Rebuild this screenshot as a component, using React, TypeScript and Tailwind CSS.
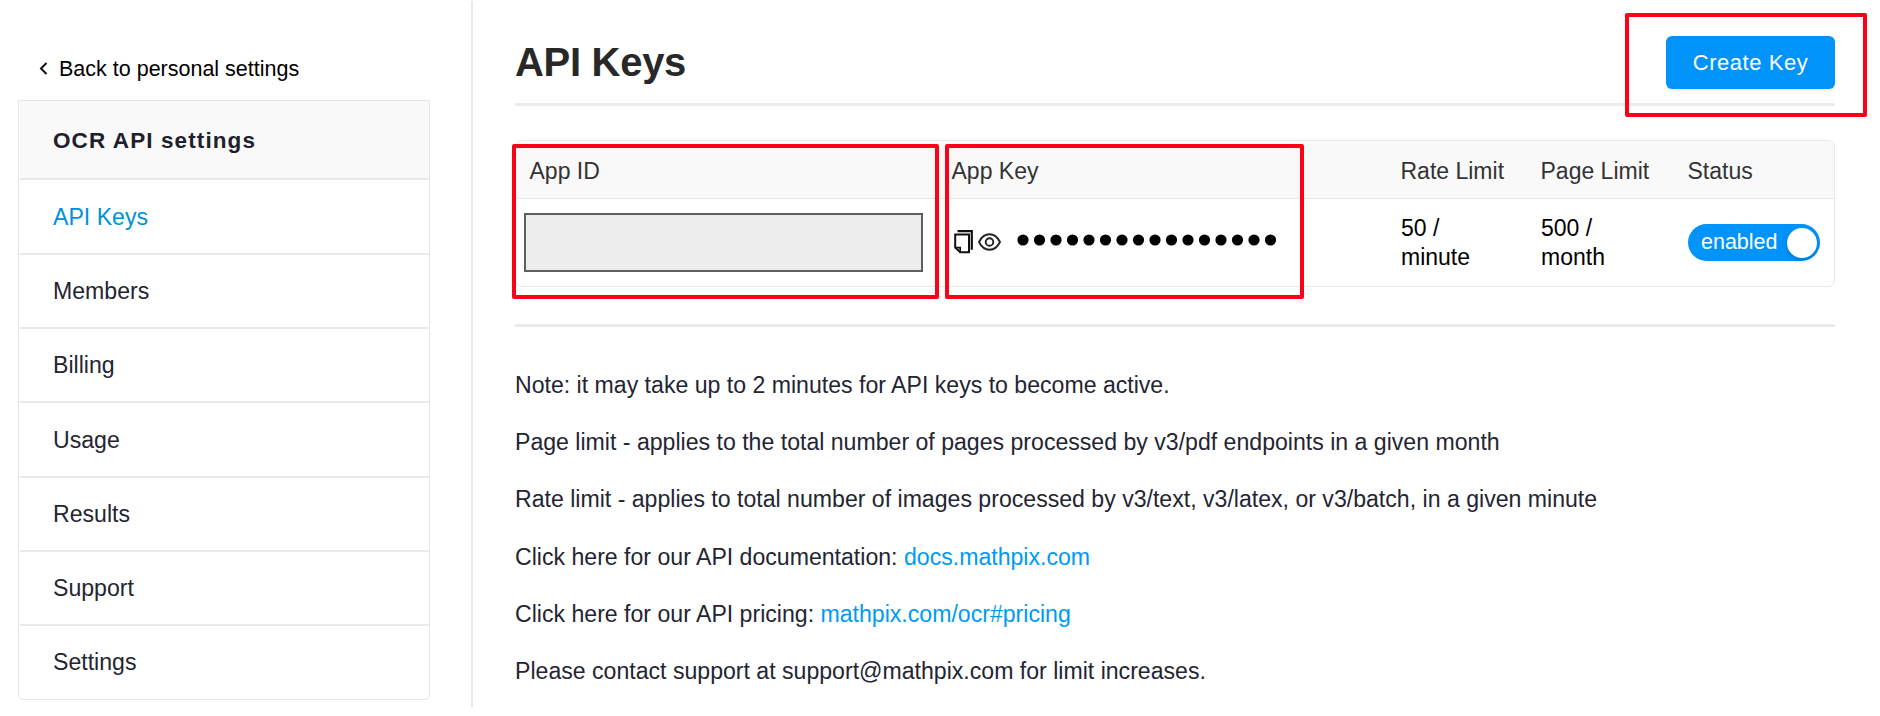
const menu: [string, string][] = [
  ['API Keys', 'h-[75px] text-[#0091da]'],
  ['Members', 'h-[74px] text-[#232533]'],
  ['Billing', 'h-[74px] text-[#232533]'],
  ['Usage', 'h-[75px] text-[#232533]'],
  ['Results', 'h-[74px] text-[#232533]'],
  ['Support', 'h-[74px] text-[#232533]'],
];

function CopyIcon() {
  return (
    <svg width="19" height="24" viewBox="0 0 19 24" fill="none" stroke="#111" strokeWidth="2">
      <path d="M1.2 4.6H15V22.2H6.2L1.2 17.6Z" />
      <path d="M1.2 17.6H6.2V22.2" strokeWidth="1.6" />
      <path d="M3.5 1.2H17.8V19.8" strokeWidth="2.2" />
    </svg>
  );
}

function EyeIcon() {
  return (
    <svg width="23" height="18" viewBox="0 0 23 18" fill="none" stroke="#222" strokeWidth="1.9">
      <path d="M1 9C3.4 4.2 7.2 1.3 11.5 1.3S19.6 4.2 22 9C19.6 13.8 15.8 16.7 11.5 16.7S3.4 13.8 1 9Z" />
      <circle cx="11.5" cy="9" r="3.8" />
    </svg>
  );
}

function Sidebar() {
  return (
    <aside className="mt-px h-[706px] w-[473px] shrink-0 border-r-2 border-[#e8e8ed] pl-[18px]">
      <a className="flex h-[99px] items-center pt-[36px] pl-[21px] text-[21.5px] text-black">
        <svg width="9" height="13" viewBox="0 0 9 13" fill="none" stroke="#111" strokeWidth="2" className="mr-[11px]">
          <path d="M7.5 1L2 6.5L7.5 12" />
        </svg>
        <span>Back to personal settings</span>
      </a>
      <nav className="h-[600px] w-[412px] rounded-b-[5px] border border-[#e5e5eb] pl-px">
        <div className="flex h-[79px] items-center border-b-2 border-[#e7e7ee] bg-[#f9f9f9] pt-[3px] pl-[33px] text-[22.5px] font-bold tracking-[1.1px] text-[#1e202c]">
          OCR API settings
        </div>
        {menu.map(([label, style]) => (
          <div key={label} className={'flex items-center border-b-2 border-[#e9e9ee] pl-[33px] ' + style}>
            {label}
          </div>
        ))}
        <div className="flex h-[72px] items-center pl-[33px] text-[#232533]">Settings</div>
      </nav>
    </aside>
  );
}

function KeysTable() {
  return (
    <div className="relative mt-[34px] h-[147px] rounded-[7px] border border-[#e8e8e8]">
      <div className="grid h-[58px] grid-cols-[422px_449px_140px_147px_1fr] items-center rounded-t-[6px] border-b border-[#e4e4e4] bg-[#f9f9f9] pt-[2px] pl-[13.5px] text-[23px] text-[#333]">
        <span>App ID</span>
        <span>App Key</span>
        <span>Rate Limit</span>
        <span>Page Limit</span>
        <span>Status</span>
      </div>
      <div className="grid h-[86px] grid-cols-[437px_448px_140px_147px_1fr] items-center text-[23px] leading-[29.5px] text-black">
        <div className="ml-[8px] h-[59px] w-[399px] border-2 border-[#5e5e5e] bg-[#ededed]" />
        <div className="flex items-center pl-px">
          <CopyIcon />
          <span className="ml-[5px]"><EyeIcon /></span>
          <svg width="260" height="12" viewBox="0 0 260 12" className="mb-[5px] ml-[16px]">
            {Array.from({ length: 16 }, (_, i) => (
              <circle key={i} cx={6 + i * 16.5} cy="6" r="5.6" />
            ))}
          </svg>
        </div>
        <span className="pt-[2px]">50 /<br />minute</span>
        <span className="pt-[2px]">500 /<br />month</span>
        <div className="mt-px flex h-[37px] w-[132px] items-center justify-between rounded-full bg-[#0093fa] pr-[3px] pl-[13px] text-[21.5px] tracking-normal text-white">
          <span>enabled</span>
          <span className="size-[30px] rounded-full bg-white shadow-[0_3px_5px_rgba(0,35,11,0.2)]" />
        </div>
      </div>
      <div className="absolute top-[3px] left-[-4px] h-[155px] w-[427px] rounded-[2px] border-4 border-[#ff0019]" />
      <div className="absolute top-[3px] left-[429px] h-[155px] w-[359px] rounded-[2px] border-4 border-[#ff0019]" />
    </div>
  );
}

export default function App() {
  return (
    <div className="flex h-[716px] w-[1880px] overflow-hidden bg-white font-['Liberation_Sans',Arial,sans-serif] text-[23.1px] leading-[30px]">
      <Sidebar />
      <main className="ml-[42px] w-[1320px]">
        <header className="relative flex h-[106px] justify-between border-b-3 border-[#ebebeb] pt-[36px]">
          <h1 className="pt-[3px] text-[40px] leading-[46px] font-bold tracking-[-0.3px] text-[#282828]">API Keys</h1>
          <button className="h-[53px] w-[169px] rounded-[6px] bg-[#0093fa] text-[22px] tracking-[0.55px] text-white shadow-[0_2px_2px_rgba(0,0,0,0.05)]">
            Create Key
          </button>
          <div className="absolute top-[13px] left-[1110px] h-[104px] w-[242px] rounded-[2px] border-4 border-[#ff0019]" />
        </header>
        <KeysTable />
        <section className="mt-[37px] flex flex-col gap-[27.2px] border-t-3 border-[#ebebeb] pt-[43px] text-[#232533]">
          <p>Note: it may take up to 2 minutes for API keys to become active.</p>
          <p>Page limit - applies to the total number of pages processed by v3/pdf endpoints in a given month</p>
          <p>Rate limit - applies to total number of images processed by v3/text, v3/latex, or v3/batch, in a given minute</p>
          <p>Click here for our API documentation: <a className="text-[#009af5]">docs.mathpix.com</a></p>
          <p>Click here for our API pricing: <a className="text-[#009af5]">mathpix.com/ocr#pricing</a></p>
          <p>Please contact support at support@mathpix.com for limit increases.</p>
        </section>
      </main>
    </div>
  );
}
